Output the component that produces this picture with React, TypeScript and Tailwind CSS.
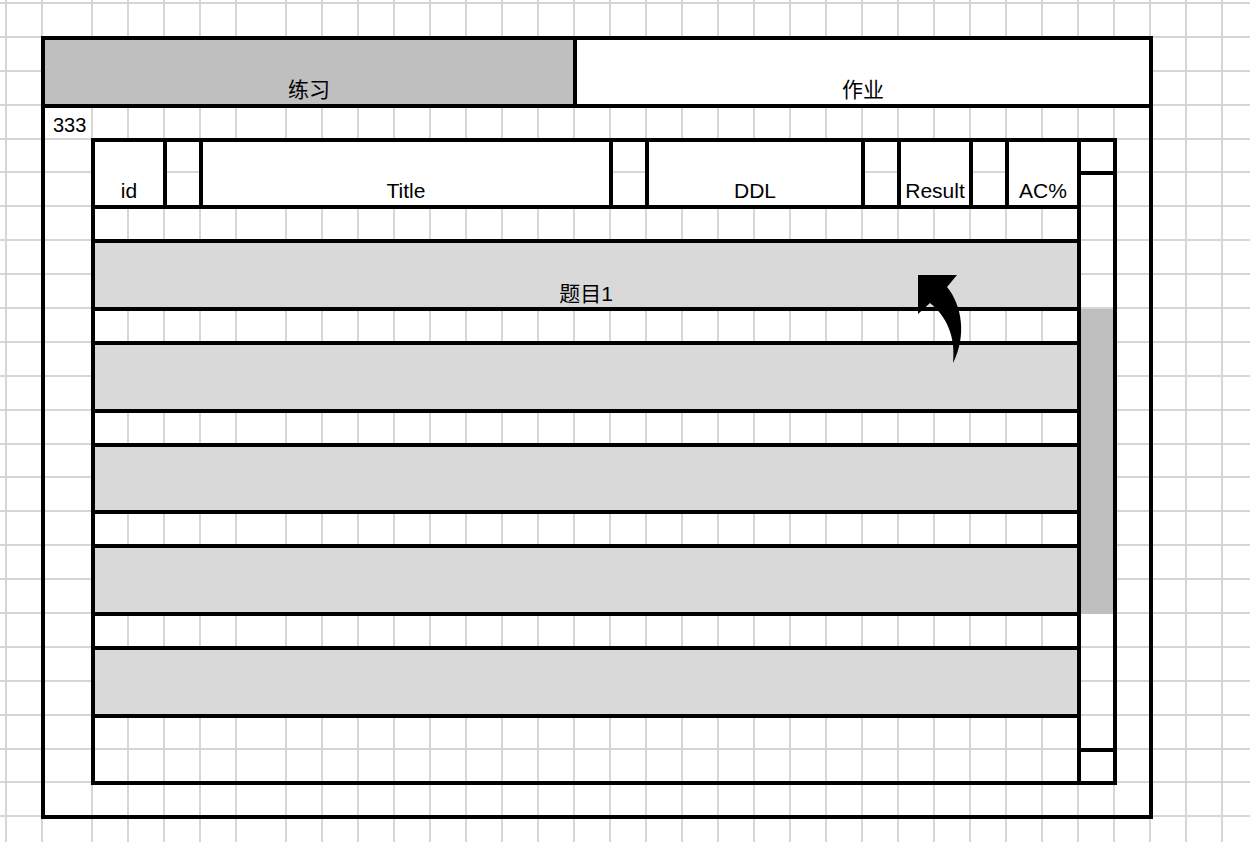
// Excel-style wireframe: practice / homework tabs over a problem table with a scroll bar.

const COLS = 35;
const ROWS = 26;

const FONT = "font-['Liberation_Sans','Noto_Sans_CJK_SC',sans-serif]";
const BOX = "-m-[2px] border-4 border-black";

const HEADERS = [
  { label: "id", cls: "col-start-4 col-end-6 bg-white" },
  { label: "", cls: "col-start-6 col-end-7" },
  { label: "Title", cls: "col-start-7 col-end-18 bg-white" },
  { label: "", cls: "col-start-18 col-end-19" },
  { label: "DDL", cls: "col-start-19 col-end-25 bg-white" },
  { label: "", cls: "col-start-25 col-end-26" },
  { label: "Result", cls: "col-start-26 col-end-28 bg-white" },
  { label: "", cls: "col-start-28 col-end-29" },
  { label: "AC%", cls: "col-start-29 col-end-31 bg-white" },
];

const GRAY_ROWS = [
  { cls: "row-start-9 row-end-11", label: "题目1" },
  { cls: "row-start-12 row-end-14", label: "" },
  { cls: "row-start-15 row-end-17", label: "" },
  { cls: "row-start-18 row-end-20", label: "" },
  { cls: "row-start-21 row-end-23", label: "" },
];

function Gridlines() {
  const cells = [];
  for (let r = 1; r <= ROWS; r++) {
    for (let c = 1; c <= COLS; c++) {
      cells.push(
        <div
          key={`${r}-${c}`}
          style={{ gridRow: r, gridColumn: c }}
          className="border-r-2 border-b-2 border-[#d6d6d6]"
        />
      );
    }
  }
  return <>{cells}</>;
}

function CurvedArrow() {
  return (
    <svg
      className="pointer-events-none absolute left-[910px] top-[268px] h-[100px] w-[60px]"
      viewBox="910 268 60 100"
    >
      <path
        d="M918 275 L957 275 L947 287 C962 305 967 336 953 363 C956 336 946 316 930 303 L918 314 Z"
        fill="#000"
      />
    </svg>
  );
}

export default function App() {
  return (
    <div
      className={`relative grid h-[842px] w-[1250px] overflow-hidden bg-white text-[21px] leading-none text-black ${FONT} grid-cols-[7px_36px_50px_36px_36px_36px_36px_50px_repeat(27,36px)] grid-rows-[4px_repeat(25,33.9px)]`}
    >
      <Gridlines />

      {/* outer frame */}
      <div className={`col-start-3 col-end-33 row-start-3 row-end-26 ${BOX}`} />

      {/* tabs */}
      <div className={`col-start-3 col-end-17 row-start-3 row-end-5 flex items-end justify-center bg-[#bfbfbf] pb-[4px] ${BOX}`}>
        练习
      </div>
      <div className={`col-start-17 col-end-33 row-start-3 row-end-5 flex items-end justify-center bg-white pb-[4px] ${BOX}`}>
        作业
      </div>

      <div className="col-start-3 col-end-4 row-start-5 row-end-6 flex items-center pl-[10px] pt-[4px] text-[20px]">333</div>

      {/* table body */}
      <div className={`col-start-4 col-end-31 row-start-8 row-end-25 ${BOX}`} />
      {GRAY_ROWS.map((g, i) => (
        <div
          key={i}
          className={`col-start-4 col-end-31 flex items-end justify-center bg-[#d9d9d9] pb-[3px] ${g.cls} ${BOX}`}
        >
          {g.label}
        </div>
      ))}

      {/* header */}
      {HEADERS.map((h, i) => (
        <div key={i} className={`row-start-6 row-end-8 flex items-end justify-center pb-[4px] ${h.cls} ${BOX}`}>
          {h.label}
        </div>
      ))}

      {/* scroll bar */}
      <div className="col-start-31 col-end-32 row-start-11 row-end-20 bg-[#bfbfbf]" />
      <div className={`col-start-31 col-end-32 row-start-6 row-end-25 ${BOX}`} />
      <div className={`col-start-31 col-end-32 row-start-6 row-end-7 ${BOX}`} />
      <div className={`col-start-31 col-end-32 row-start-24 row-end-25 ${BOX}`} />

      <CurvedArrow />
    </div>
  );
}
